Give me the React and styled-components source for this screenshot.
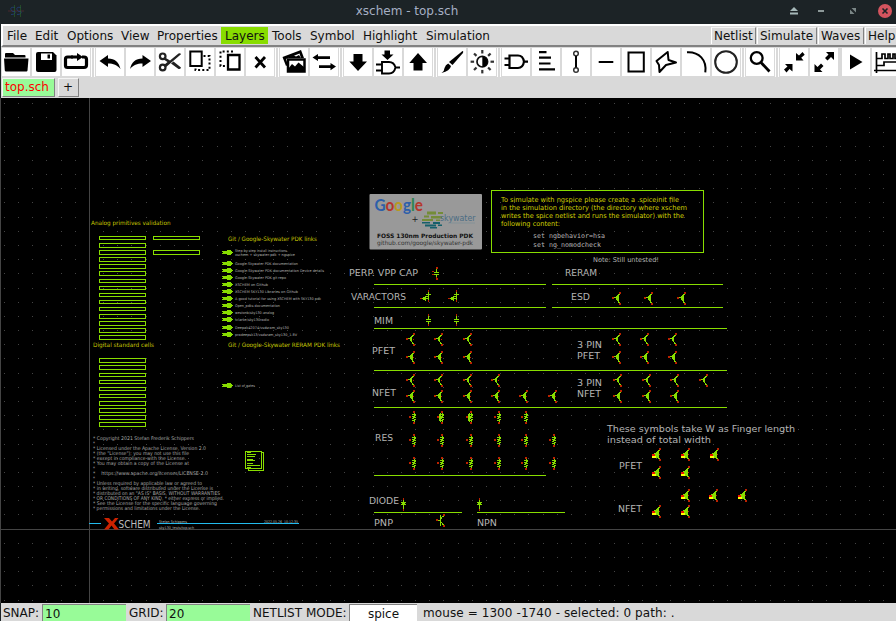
import React from 'react';
import styled, { createGlobalStyle } from 'styled-components';

const Global = createGlobalStyle`
  * { box-sizing: border-box; }
  body { margin: 0; background: #000; overflow: hidden; }
`;

const UI_FONT = '"DejaVu Sans", sans-serif';
const GREEN = '#88dd00';
const RED = '#bb2200';

const Window = styled.div`
  width: 896px;
  height: 621px;
  display: flex;
  flex-direction: column;
  overflow: hidden;
  background: #1c2326;
  font-family: ${UI_FONT};
  font-size: 12px;
  color: #111;
`;

const TitleBar = styled.header`
  height: 24px;
  flex: none;
  display: grid;
  grid-template-columns: 120px 1fr 120px;
  align-items: center;
  padding: 0 3px 3px 8px;
  background: #1c2326;
`;

const TitleText = styled.h1`
  margin: 0;
  text-align: center;
  font: 400 12px/20px ${UI_FONT};
  color: #a6afc4;
  padding-right: 87px;
`;

const WindowButtons = styled.div`
  display: flex;
  justify-content: flex-end;
`;

const Body = styled.div`
  flex: 1;
  min-height: 0;
  margin-left: 1px;
  display: flex;
  flex-direction: column;
  background: #d9d9d9;
`;

const MenuBar = styled.nav`
  height: 23px;
  flex: none;
  display: flex;
  border-top: 2px solid #fff;
  border-left: 2px solid #fff;
  border-bottom: 2px solid #828282;
  padding-top: 1px;
`;

const MenuItem = styled.span`
  width: ${(p) => p.$w}px;
  height: 17px;
  line-height: 18px;
  padding-left: 4px;
  flex: none;
  white-space: nowrap;
  background: ${(p) => (p.$active ? '#88dd00' : 'transparent')};
`;

const Actions = styled.div`
  margin-left: auto;
  display: flex;
  gap: 1px;
  margin-right: -3px;
`;

const ActionButton = styled.span`
  width: ${(p) => p.$w}px;
  height: 17px;
  line-height: 16px;
  padding-left: 2px;
  white-space: nowrap;
  border-top: 1px solid #f4f4f4;
  border-left: 1px solid #fff;
  border-right: 1px solid #828282;
`;

const ToolBar = styled.div`
  height: 30px;
  flex: none;
  display: flex;
  padding: 1px 0 0 1px;
  overflow: hidden;
`;

const ToolGroup = styled.div`
  display: flex;
  flex: none;
  gap: 2px;
`;

const ToolSeparator = styled.span`
  flex: none;
  width: 4px;
  height: 29px;
  margin: 0 ${(p) => (p.$plain ? 0 : 1)}px;
  border: solid #fff;
  border-width: 0 ${(p) => (p.$plain ? 0 : 1)}px;
`;

const ToolButton = styled.span`
  width: 28px;
  height: 28px;
  flex: none;
  background: #fff;
  svg { display: block; }
`;

const TabStrip = styled.div`
  height: 21px;
  flex: none;
  display: flex;
  gap: 2px;
  padding: 1px 0 0 1px;
`;

const Tab = styled.span`
  width: ${(p) => p.$w}px;
  height: 19px;
  line-height: 17px;
  padding-left: ${(p) => p.$pad}px;
  border: 1px solid;
  border-color: #f4f4f4 #828282 #828282 #f4f4f4;
  background: ${(p) => (p.$current ? '#98fb98' : '#d9d9d9')};
  color: ${(p) => (p.$current ? '#ff0000' : '#111')};
  ${(p) => (p.$current ? '' : 'margin-left: 1px;')}
`;

const Canvas = styled.main`
  height: 505px;
  flex: none;
  background: #000;
  margin-left: -1px;
  svg { display: block; }
`;

const SText = styled.text`
  font-family: ${(p) => (p.$mono ? '"DejaVu Sans Mono", monospace' : '"DejaVu Sans", sans-serif')};
  font-size: ${(p) => p.$s}px;
  font-weight: ${(p) => (p.$bold ? 700 : 400)};
  fill: ${(p) => p.$c || '#b4b4b4'};
  white-space: pre;
`;

const LogoText = styled.text`
  font-family: Lato, sans-serif;
  font-size: 17.5px;
  font-weight: 700;
`;

const StatusBar = styled.footer`
  height: 18px;
  flex: none;
  display: flex;
  padding-left: 2px;
  line-height: 21px;
  white-space: pre;
`;

const StatusLabel = styled.span`
  width: ${(p) => p.$w}px;
  padding-left: ${(p) => p.$pad || 0}px;
  letter-spacing: ${(p) => (p.$loose ? 0.09 : 0)}px;
  flex: none;
`;

const Field = styled.span`
  width: ${(p) => p.$w}px;
  height: 17px;
  margin-top: 1px;
  line-height: 18px;
  flex: none;
  padding-left: ${(p) => (p.$center ? 0 : 2)}px;
  text-align: ${(p) => (p.$center ? 'center' : 'left')};
  background: ${(p) => (p.$center ? '#fff' : '#98fb98')};
  border-top: 1px solid #828282;
  border-left: 1px solid #828282;
`;

const St = (p) => <path fill="none" stroke="#000" strokeWidth="2" {...p} />;

const rays = [0, 45, 90, 135, 180, 225, 270, 315];

const icons = {
  open: <><path d="M3 9.500V6q0-1 1-1h7l2 2h9.500q1 0 1 1v1.500z" /><path d="M2 10.500h24.500l-1 12q-.2 1-1 1H4q-1 0-1.200-1z" /></>,
  save: <><path d="M6 4h15l3.500 3.500V22q0 2-2 2H6q-2 0-2-2V6q0-2 2-2z" /><path d="M9 5.500h11v6.500H9z" fill="#fff" /><path d="M15.500 6.500h2.500v4h-2.500z" /></>,
  reload: <><St d="M11 9H5.500q-2 0-2 2v6.500q0 2 2 2H22q2.500 0 2.500-2.500v-5.500q0-2.500-2.500-2.500h-2" strokeWidth="3.200" /><path d="M9 7.500h6V5l6 4-6 4v-2.500H9z" /></>,
  undo: <path d="M3.500 13 12 7v3.500c7 0 11 4 12.500 10.500-3.500-4-7-5.500-12.500-5.500V19z" />,
  redo: <path d="M25 13 16.500 7v3.500c-7 0-11 4-12.500 10.500 3.500-4 7-5.500 12.500-5.500V19z" />,
  cut: <><circle cx="6.700" cy="8.300" r="2.800" fill="none" stroke="#222" strokeWidth="2.200" /><circle cx="6.700" cy="19.500" r="2.800" fill="none" stroke="#222" strokeWidth="2.200" /><path d="M9 9.500 14 12.500l8.500-7q2-.8 2.500.7L9.500 19.500 8 17l3.500-3-3.800-2.500zM15 15.500l2.500-2 7.500 6q-.5 2-2.500 1.500z" fill="#222" /></>,
  copy: <><St d="M4.300 3.500h11.400V18H4.300z" /><St d="M17.500 8H23.500V22H9.500V19" strokeDasharray="2 2.200" /></>,
  move: <><St d="M12 7h11.500v14.500H12z" strokeWidth="2.300" /><St d="M17 3.500H4.500V18H10" strokeDasharray="2 2.200" /></>,
  del: <St d="M9.500 9 19 19.500M19 9 9.500 19.500" strokeWidth="2.800" />,
  image: <><path d="M2.500 9 21 2l3 8h-3l-1.500-4.500L6 11l2 6-2 1z" /><path d="m9 9 4-2 3 1.500L19 7l2 3H9z" /><St d="M8 11.500h16.500v12H8z" strokeWidth="2.500" /><path d="m8 21 4-5 3 2.500 3.500-4L24 19v4H8z" /></>,
  swap: <path d="M2.500 9.500 8 6v2.200h12v2.800H8V13zM26 18.500 20.500 15v2.200H9V20h11.500v2.200z" />,
  down: <path d="M9.500 6h9v7.500h4.500L14 23l-8.700-9.500h4.200z" />,
  gateDown: <><path d="M10.500 2.500h5.500v4h3.500l-6 5.500-6-5.500h3z" /><St d="M8 14h7q5 0 6.500 5.500Q20 25.500 15 25.500H8zM2 16.500h6M2 22.500h6M22 19.500h4" strokeWidth="1.900" /></>,
  up: <path d="M9.500 22.500h9V15h4.500L14 5l-8.700 10h4.200z" />,
  brush: <><path d="M24.500 3q1.500.5 0 2.500L14.500 17 11 14z" /><path d="M10.200 15.500 13 18q-1 5-9.500 7 3-2 3-5 1-3.500 3.700-4.500z" /></>,
  light: <><circle cx="14.300" cy="13.700" r="5.300" fill="none" stroke="#111" strokeWidth="1.700" /><path d="M14.300 8.500a5.200 5.200 0 0 1 0 10.400z" />{rays.map((a) => <path key={a} d="M14.300 2v3.500" stroke="#333" strokeWidth="2.200" transform={`rotate(${a} 14.300 13.700)`} />)}</>,
  gate: <St d="M7.500 7.500h8.500q5 0 6 6.200-1 6.300-6 6.300H7.500zM2.500 10.500h5M2.500 17h5M22 13.700h4" strokeWidth="2.200" />,
  text: <St d="M7 4.200h7.500M7 9.700h12M7 15.500h11.500M7 21.300h16" strokeWidth="2.200" />,
  wire: <><circle cx="14" cy="5.500" r="2.300" fill="none" stroke="#333" strokeWidth="1.500" /><circle cx="14" cy="22" r="2.300" fill="none" stroke="#333" strokeWidth="1.500" /><St d="M14 8v11.500" strokeWidth="2" /></>,
  line: <St d="M6.700 14h14.600" />,
  rect: <St d="M6.500 4.500h15.300v19H6.500z" />,
  poly: <St d="m15.700 4 .8 8 7.500 2.500-10 2.500-6.500 7-.5-7-2.500-4z" strokeWidth="2" strokeLinejoin="round" />,
  arc: <St d="M5 4.200C17 3.500 25 12 23.300 24.300" />,
  circle: <circle cx="14" cy="14" r="10.800" fill="none" stroke="#222" strokeWidth="2.100" />,
  find: <><circle cx="10.700" cy="10" r="5.900" fill="none" stroke="#000" strokeWidth="2.300" /><St d="m15 14.500 8.500 9" strokeWidth="2.800" /></>,
  shrink: <><path d="M16 5v7.500h7.500l-2.300-2.700 3.500-3L22.500 4l-3.500 3.500z" /><path d="M12.500 23.500V16H5l2.500 2.500-3.500 3L6.500 24.500l3-3.500z" /></>,
  grow: <><path d="M24 12V4h-8l2.500 2.500-3.500 3.500 2.500 2.500L21 9z" /><path d="M4.500 16v8h8L10 21.500l3.500-3.500L11 15.500 7.500 19z" /></>,
  play: <path d="M8 6.500 20.500 14 8 21.500z" />,
  waves: <path d="M4.500 4v21M2 22.500h26M4 10.500h6V6h3v4.500h3V6h2v4.500h3V6h2v4.500h3V6h3M4 17.500h8V14h16" fill="none" stroke="#000" strokeWidth="1.700" />,
};

const groups = [
  ['open', 'save', 'reload'],
  ['undo', 'redo', 'cut', 'copy', 'move', 'del'],
  ['image', 'swap'],
  ['down', 'gateDown', 'up'],
  ['brush', 'light'],
  ['gate', 'text', 'wire', 'line', 'rect', 'poly', 'arc', 'circle'],
  ['find'],
  ['shrink', 'grow'],
  ['play', 'waves'],
];

const menus = [['File', 28], ['Edit', 32], ['Options', 54], ['View', 36], ['Properties', 68], ['Layers', 47], ['Tools', 38], ['Symbol', 53], ['Highlight', 63], ['Simulation', 72]];
const actions = [['Netlist', 45], ['Simulate', 60], ['Waves', 46], ['Help', 34]];

/* Schematic drawing */

const Label = ({ x, y, w, s = 10, c, mono, bold, children }) => (
  <SText x={x} y={y} textLength={w} lengthAdjust="spacingAndGlyphs" $s={s} $c={c} $mono={mono} $bold={bold}>{children}</SText>
);

const PITCH = 14.18;
const gridDots = () => {
  let d = '';
  for (let i = -6; i < 57; i++) {
    for (let j = -5; j < 31; j++) {
      const x = Math.floor(89.4 + i * PITCH);
      const y = Math.floor(529.1 - j * PITCH);
      if (y >= 98 && y < 603) d += `M${x} ${y}h1v1h-1z`;
    }
  }
  return d;
};

const Fet = ({ x, y, wide, finger, half }) => (
  <g transform={`translate(${x} ${y})`}>
    <path fill={GREEN} d={`M2 5h2v1h-2zM4 4h1v4h-1zM5 3h1v6h-1zM6 2h1v2h-1zM6 9h1v2h-1zM7 2h1v1h-1zM7 10h1v1h-1z${wide ? 'M4 4h3v4h-3zM5 3h2v6h-2z' : ''}`} />
    <path fill={RED} d={`${finger ? '' : 'M0 5h2v2h-2z'}M7 0h2v2h-2zM7 11h2v2h-2z${half ? '' : 'M7 6h1v1h-1z'}`} />
    {finger && <><path fill={GREEN} d="M3 6h4v4h-4zM5 4h2v2h-2z" /><path fill="#ee1100" d="M0 6h3v2h-3z" /><path fill="#ffff00" d="M0 8h4v2h-4z" /></>}
  </g>
);

const Res = ({ x, y, body }) => (
  <g transform={`translate(${x} ${y})`}>
    <path fill={GREEN} d={`M0 2h1v1h-1zM-2 3h4v1h-4zM0 4h2v1h-2zM-2 5h3v1h-3zM-1 6h3v1h-3zM-2 7h2v1h-2zM0 8h2v1h-2zM-2 9h3v1h-3zM0 10h1v1h-1z${body ? 'M-3 3h1v7h-1zM-2 2h1v9h-1z' : ''}`} />
    <path fill={RED} d="M-1 0h2v2h-2zM-1 11h2v2h-2zM-5 5h2v2h-2z" />
  </g>
);

const Cap = ({ x, y, side, bulk }) => (
  <g transform={`translate(${x} ${y})`}>
    <path fill={GREEN} d={bulk ? 'M0 1h1v9h-1zM-2 4h5v1h-5zM-2 6h3v1h-3zM-6 8h6v1h-6zM-5 7h2v3h-2zM-3 6h1v5h-1z' : 'M0 2h1v3h-1zM-2 5h5v1h-5zM-2 7h5v1h-5zM0 7h1v4h-1z'} />
    <path fill={RED} d={`M0 0h1v2h-1zM0 10h1v2h-1z${side ? 'M0 0h2v2h-2zM0 11h2v2h-2zM-4 4h2v1h-2zM-4 7h2v1h-2z' : ''}${bulk ? 'M-8 8h2v1h-2z' : ''}`} />
  </g>
);

const Diode = ({ x, y }) => (
  <g transform={`translate(${x} ${y})`}>
    <path fill={GREEN} d="M0 1h1v10h-1zM-2 4h5v1h-5zM-1 5h3v1h-3zM-2 6h5v1h-5z" />
    <path fill={RED} d="M0 0h1v2h-1zM0 11h1v2h-1z" />
  </g>
);

const Bipolar = ({ x, y }) => (
  <g transform={`translate(${x} ${y})`}>
    <path fill={GREEN} d="M2 6h2v1h-2zM4 1h1v11h-1zM5 3h1v2h-1zM6 2h2v1h-2zM5 8h1v1h-1zM6 9h1v2h-1zM7 10h1v1h-1z" />
    <path fill={RED} d="M0 5h2v2h-2zM7 0h2v2h-2zM7 11h2v2h-2z" />
  </g>
);

const boxes = [
  [236, 3], [243, 4], [250, 4], [257, 4], [264, 4], [271, 4], [279, 3], [286, 3], [293, 3], [300, 3], [307, 3], [314, 4], [321, 4], [328, 4], [335, 4],
  [358, 4], [365, 4], [373, 3], [380, 3], [387, 3], [394, 3], [401, 4], [408, 4], [415, 4], [422, 4],
];

const fets = [
  ...[406, 434, 463].flatMap((x) => [[x, 333], [x, 351, 1]]),
  ...[406, 434, 463, 491].map((x) => [x, 374]),
  ...[406, 434, 463, 491, 519, 548].map((x) => [x, 390, 1]),
  ...[612, 640, 668].flatMap((x) => [[x, 333, 0, 0, 1], [x, 351, 1, 0, 1]]),
  ...[613, 642, 670, 699].map((x) => [x, 374, 0, 0, 1]),
  ...[613, 642, 670].map((x) => [x, 390, 1, 0, 1]),
  ...[612, 644, 677].map((x) => [x, 292, 1, 0, 1]),
  ...[652, 681, 710].map((x) => [x, 448, 0, 1]),
  ...[652, 681].flatMap((x) => [[x, 466, 0, 1], [x, 505, 0, 1]]),
  ...[681, 709, 738].map((x) => [x, 489, 0, 1]),
];

const links = [
  [252, null], [263, 'Google-Skywater PDK documentation', 63], [270, 'Google-Skywater PDK documentation Device details', 89],
  [277, 'Google-Skywater PDK git repo', 51], [284, 'XSCHEM on Github', 33], [291, 'XSCHEM SKY130 Libraries on Github', 63],
  [298, 'A good tutorial for using XSCHEM with SKY130 pdk', 86], [305, 'Open_pdks documentation', 45], [312, 'westonb/sky130-analog', 39],
  [319, 'tclarke/sky130radio', 34], [327, 'Deepak42074/vsdsram_sky130', 54], [334, 'pradeepsk13/vsdsram_sky130_1.8V', 62], [385, 'List of gates', 20],
];

const license = [
  ['* Copyright 2021 Stefan Frederik Schippers', 101], ['*', 2], ['* Licensed under the Apache License, Version 2.0', 113],
  ['* (the "License"); you may not use this file', 96], ['* except in compliance with the License.', 93], ['* You may obtain a copy of the License at', 96],
  ['*', 2], ['*    https://www.apache.org/licenses/LICENSE-2.0', 115], ['*', 2], ['* Unless required by applicable law or agreed to', 109],
  ['* in writing, software distributed under the License is', 120], ['* distributed on an "AS IS" BASIS, WITHOUT WARRANTIES', 127],
  ['* OR CONDITIONS OF ANY KIND, * either express or implied.', 131], ['* See the License for the specific language governing', 124], ['* permissions and limitations under the License.', 107],
];

const YELLOW = '#c4c400';

const Schematic = () => (
  <svg width="896" height="505" viewBox="0 98 896 505">
    <g shapeRendering="crispEdges">
      <path d={gridDots()} fill="#444" />
      <path d="M89 98h1v505h-1zM0 529h896v1H0zM0 98h1v505H0z" fill="#444" />
      <g fill="none" stroke={GREEN}>
        {boxes.map(([y, h]) => <rect key={y} x="99.500" y={y + 0.5} width="46" height={h} />)}
        <rect x="153.500" y="236.500" width="46" height="3" />
        <rect x="153.500" y="250.500" width="46" height="4" />
        <rect x="491.500" y="190.500" width="212" height="62" />
        <path d="M374 284.500h172M552 284.500h171M374 307.500h172M552 307.500h171M374 328.500h353M374 370.500h353M374 407.500h353M374 475.500h172M374 512.500h88M477 512.500h88" />
        <path d="M245.500 451.500h16v17h-16zM262 452.500h1.500v18h-15.500v-2M247 452.500h4M247 454.500h9M247 456.500h8M247 459.500h6M247 460.500h8M247 463.500h6M247 465.500h13M247 467.500h4" />
      </g>
      {links.map(([y]) => <path key={y} fill={GREEN} d={`M222 ${y - 1}h5v-1h4v1h1v1h1v1h-1v1h-1v1h-4v-1h-5v-1h1v-1h-1z`} />)}
      {fets.map(([x, y, wide, finger, half]) => <Fet key={`${x}-${y}`} x={x} y={y} wide={wide} finger={finger} half={half} />)}
      {[414, 442, 471, 499, 526, 554].flatMap((x, i) => [411, 434, 457].map((y, r) => (i === 5 && r === 0 ? null : <Res key={`${x}-${y}`} x={x} y={y} body={r === 0 && (i === 1 || i === 2)} />)))}
      <Cap x={436} y={267} side />
      <Cap x={428} y={290} bulk />
      <Cap x={456} y={290} bulk />
      <Cap x={428} y={314} />
      <Cap x={456} y={314} />
      <Diode x={403} y={498} />
      <Diode x={479} y={498} />
      <Bipolar x={436} y={514} />
      <path d="M89 523h12v1H89zM157 523h142v1H157z" fill="#22bbee" />
    </g>

    <Label x={91} y={225} w={79.500} s={6} c={YELLOW}>Analog primitives validation</Label>
    <Label x={93} y={347} w={61} s={6} c={YELLOW}>Digital standard cells</Label>
    <Label x={228} y={241} w={89} s={6} c={YELLOW}>Git / Google-Skywater PDK links</Label>
    <Label x={228} y={347} w={112} s={6} c={YELLOW}>Git / Google-Skywater RERAM PDK links</Label>
    <Label x={235} y={252} w={53} s={3.6}>Step-by-step install instructions.</Label>
    <Label x={235} y={256} w={60} s={3.6}>xschem + skywater-pdk + ngspice</Label>
    {links.filter((l) => l[1]).map(([y, t, w]) => <Label key={y} x={235} y={y + 2} w={w} s={3.6}>{t}</Label>)}
    {license.map(([t, w], i) => <Label key={i} x={93} y={440 + i * 5} w={w} s={5} c="#a8a8a8">{t}</Label>)}
    <path d="M104 518h5l3 3.500 3-3.500h3.500l-4.500 5.500 5 6h-4.500l-3-4-3 4H104l5-6z" fill="#cc2200" />
    <Label x={118.500} y={528} w={32} s={9.6} c="#bcbcbc">SCHEM</Label>
    <Label x={159} y={523} w={28} s={3.6}>Stefan Schippers</Label>
    <Label x={159} y={529} w={35} s={3.6}>sky130_tests/top.sch</Label>
    <Label x={264} y={523} w={34} s={3.6}>2022.05.26  10:12:35</Label>

    <rect x="369.500" y="194" width="112.500" height="55.500" rx="1" fill="#999" />
    <LogoText x="374.500" y="210.500" textLength="48.500" lengthAdjust="spacingAndGlyphs">
      <tspan fill="#2d5faa">G</tspan><tspan fill="#b5352d">o</tspan><tspan fill="#b99a20">o</tspan><tspan fill="#2d5faa">g</tspan><tspan fill="#2c8650">l</tspan><tspan fill="#b5352d">e</tspan>
    </LogoText>
    <Label x={411.500} y={222} w={7} s={9} c="#222">+</Label>
    <path d="M427 211.500h9v3h-9zM438 212h5v2h-5zM424 215.500h5v2h-5zM431 216h11v2.500h-11zM422 219h11v2h-11zM436 219.500h4v1.500h-4z" fill="#748c38" />
    <path d="M422 222h8v1.500h-8zM433 222h7v2h-7zM425 224.500h11v2h-11zM438 224.500h4v1.500h-4zM430 227h7v1.500h-7z" fill="#16606b" />
    <Label x={440} y={220.500} w={35.500} s={8.3} c="#4b6d84">skywater</Label>
    <path d="M448 223h27" stroke="#7f9198" strokeWidth=".8" />
    <Label x={377} y={237.500} w={96} s={6} c="#111" bold>FOSS 130nm Production PDK</Label>
    <Label x={377} y={244.500} w={96} s={6} c="#333">github.com/google/skywater-pdk</Label>

    <Label x={501} y={201.500} w={178} s={6.8} c="#d0d000">To simulate with ngspice please create a .spiceinit file</Label>
    <Label x={501} y={209.500} w={186} s={6.8} c="#d0d000">in the simulation directory (the directory where xschem</Label>
    <Label x={501} y={217.500} w={183} s={6.8} c="#d0d000">writes the spice netlist and runs the simulator) with the</Label>
    <Label x={501} y={225.500} w={59} s={6.8} c="#d0d000">following content:</Label>
    <Label x={533} y={238} w={72} s={6.7} mono>set ngbehavior=hsa</Label>
    <Label x={533} y={247} w={68} s={6.7} mono>set ng_nomodcheck</Label>
    <Label x={593} y={262} w={66} s={6.7}>Note: Still untested!</Label>

    <Label x={349} y={276} w={69} s={9.4}>PERP. VPP CAP</Label>
    <Label x={351} y={300} w={55} s={9.4}>VARACTORS</Label>
    <Label x={374} y={324} w={19} s={9.4}>MIM</Label>
    <Label x={372} y={354} w={23} s={9.4}>PFET</Label>
    <Label x={372} y={396} w={24} s={9.4}>NFET</Label>
    <Label x={375} y={441} w={18} s={9.4}>RES</Label>
    <Label x={369} y={504} w={30} s={9.4}>DIODE</Label>
    <Label x={374} y={526} w={19} s={9.4}>PNP</Label>
    <Label x={477} y={526} w={20} s={9.4}>NPN</Label>
    <Label x={565} y={276} w={32} s={9.4}>RERAM</Label>
    <Label x={571} y={300} w={19} s={9.4}>ESD</Label>
    <Label x={577} y={348} w={25} s={9.4}>3 PIN</Label>
    <Label x={577} y={359} w={23} s={9.4}>PFET</Label>
    <Label x={577} y={386} w={25} s={9.4}>3 PIN</Label>
    <Label x={577} y={397} w={24} s={9.4}>NFET</Label>
    <Label x={607} y={432} w={188} s={9.4}>These symbols take W as Finger length</Label>
    <Label x={607} y={443} w={104} s={9.4}>instead of total width</Label>
    <Label x={619} y={469} w={23} s={9.4}>PFET</Label>
    <Label x={618} y={512} w={24} s={9.4}>NFET</Label>
  </svg>
);

export default function App() {
  return (
    <Window>
      <Global />
      <TitleBar>
        <svg width="16" height="12" viewBox="0 0 16 12">
          <path d="M0 6h16" stroke="#5d2b30" strokeOpacity=".7" />
          <path d="M7 2.500q-5-1-4 2t4 2q1 3-4 3M13 2.500q-5-1-4 2t4 2q1 3-4 3" fill="none" stroke="#20407c" strokeOpacity=".8" />
          <path d="M6.500 0v12M12.500 0v12" stroke="#2a6427" strokeOpacity=".6" />
        </svg>
        <TitleText>xschem - top.sch</TitleText>
        <WindowButtons>
          <svg width="112" height="20" viewBox="0 0 112 20">
            <path d="M13 6l4 4H9zM9 11.500h8v2H9z" fill="#a5b8b8" />
            <path d="M37 9h6v2h-6z" fill="#8d9999" />
            <path d="M70.500 7h4.500v4.500zM69 8.500v4.500h4.500z" fill="#7b8787" />
            <circle cx="104" cy="10" r="7" fill="#d4545e" />
            <path d="m101.500 7.500 5 5m0-5-5 5" stroke="#1c2326" strokeWidth="1.600" />
          </svg>
        </WindowButtons>
      </TitleBar>
      <Body>
        <MenuBar>
          {menus.map(([name, w]) => <MenuItem key={name} $w={w} $active={name === 'Layers'}>{name}</MenuItem>)}
          <Actions>
            {actions.map(([name, w]) => <ActionButton key={name} $w={w}>{name}</ActionButton>)}
          </Actions>
        </MenuBar>
        <ToolBar>
          {groups.map((g, i) => (
            <React.Fragment key={g[0]}>
              {i > 0 && <ToolSeparator $plain={i === 8} />}
              <ToolGroup>
                {g.map((name) => (
                  <ToolButton key={name}><svg width="28" height="28" viewBox="0 0 28 28">{icons[name]}</svg></ToolButton>
                ))}
              </ToolGroup>
            </React.Fragment>
          ))}
        </ToolBar>
        <TabStrip>
          <Tab $w={53} $pad={2} $current>top.sch</Tab>
          <Tab $w={21} $pad={4}>+</Tab>
        </TabStrip>
        <Canvas><Schematic /></Canvas>
        <StatusBar>
          <StatusLabel $w={39}>SNAP:</StatusLabel>
          <Field $w={84}>10</Field>
          <StatusLabel $w={40} $pad={3}>GRID:</StatusLabel>
          <Field $w={84}>20</Field>
          <StatusLabel $w={99} $pad={3}>NETLIST MODE:</StatusLabel>
          <Field $w={68} $center>spice</Field>
          <StatusLabel $w={400} $pad={6} $loose>mouse = 1300 -1740 - selected: 0 path: .</StatusLabel>
        </StatusBar>
      </Body>
    </Window>
  );
}
